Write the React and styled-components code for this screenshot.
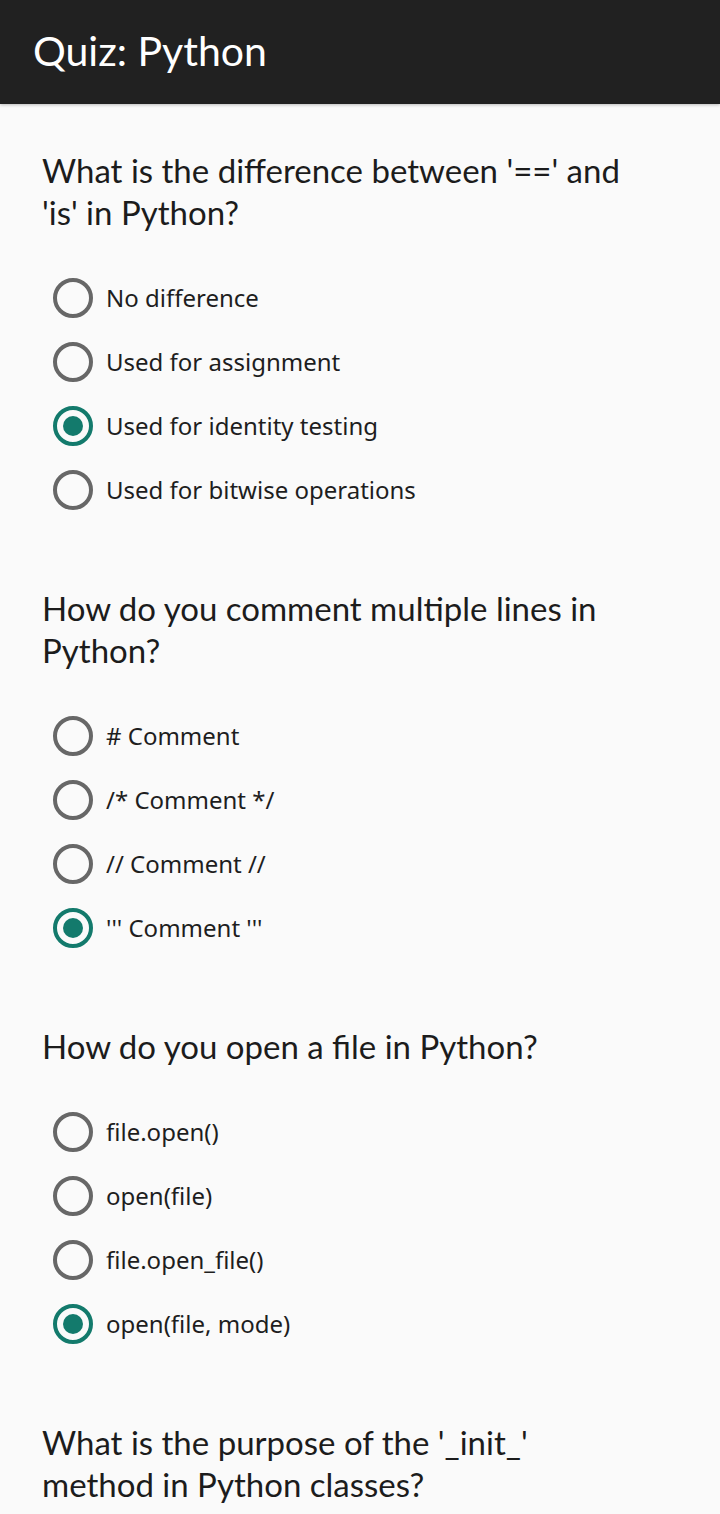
import React, { useState } from 'react';
import styled, { createGlobalStyle } from 'styled-components';

const GlobalStyle = createGlobalStyle`
  body {
    margin: 0;
    background: #fafafa;
    font-family: Lato, "Noto Sans", sans-serif;
  }
`;

const Page = styled.div`
  min-height: 1514px;
  background: #fafafa;
`;

const Header = styled.header`
  height: 104px;
  background: #212121;
  display: flex;
  align-items: center;
  padding-left: 33px;
  box-shadow: 0 1px 3px rgba(0, 0, 0, 0.25);
`;

const Title = styled.h1`
  margin: 0 0 4px;
  color: #ffffff;
  font-family: Lato, sans-serif;
  font-weight: 400;
  font-size: 41px;
`;

const Content = styled.main`
  padding: 45px 42px 0;
  display: flex;
  flex-direction: column;
  gap: 65px;
`;

const Question = styled.section`
  display: flex;
  flex-direction: column;
  gap: 33px;
`;

const QuestionText = styled.h2`
  margin: 0;
  font-family: Lato, sans-serif;
  font-weight: 400;
  font-size: 33px;
  line-height: 42px;
  color: #1c1c1c;
  max-width: 590px;
`;

const Options = styled.div`
  display: flex;
  flex-direction: column;
`;

const Option = styled.label`
  height: 64px;
  display: flex;
  align-items: center;
  gap: 13px;
  padding-left: 11px;
  cursor: pointer;
`;

const Radio = styled.span`
  width: 40px;
  height: 40px;
  box-sizing: border-box;
  border-radius: 50%;
  border: 4px solid ${(p) => (p.checked ? '#137a6c' : '#676767')};
  display: flex;
  align-items: center;
  justify-content: center;
  flex-shrink: 0;

  &::after {
    content: '';
    width: 20px;
    height: 20px;
    border-radius: 50%;
    background: #137a6c;
    display: ${(p) => (p.checked ? 'block' : 'none')};
  }
`;

const OptionText = styled.span`
  font-family: "Noto Sans", sans-serif;
  font-size: 24px;
  color: #1e1e1e;
  padding-bottom: 2px;
`;

const quiz = [
  {
    q: "What is the difference between '==' and 'is' in Python?",
    options: ['No difference', 'Used for assignment', 'Used for identity testing', 'Used for bitwise operations'],
    answer: 2,
  },
  {
    q: 'How do you comment multiple lines in Python?',
    options: ['# Comment', '/* Comment */', '// Comment //', "''' Comment '''"],
    answer: 3,
  },
  {
    q: 'How do you open a file in Python?',
    options: ['file.open()', 'open(file)', 'file.open_file()', 'open(file, mode)'],
    answer: 3,
  },
  {
    q: "What is the purpose of the '_init_' method in Python classes?",
    options: [],
    answer: -1,
  },
];

const App = () => {
  const [selected, setSelected] = useState(quiz.map((item) => item.answer));

  const pick = (qi, oi) => {
    setSelected((prev) => prev.map((v, i) => (i === qi ? oi : v)));
  };

  return (
    <Page>
      <GlobalStyle />
      <Header>
        <Title>Quiz: Python</Title>
      </Header>
      <Content>
        {quiz.map((item, qi) => (
          <Question key={qi}>
            <QuestionText>{item.q}</QuestionText>
            {item.options.length > 0 && (
              <Options>
                {item.options.map((opt, oi) => (
                  <Option key={opt} onClick={() => pick(qi, oi)}>
                    <Radio checked={selected[qi] === oi} />
                    <OptionText>{opt}</OptionText>
                  </Option>
                ))}
              </Options>
            )}
          </Question>
        ))}
      </Content>
    </Page>
  );
};

export default App;
